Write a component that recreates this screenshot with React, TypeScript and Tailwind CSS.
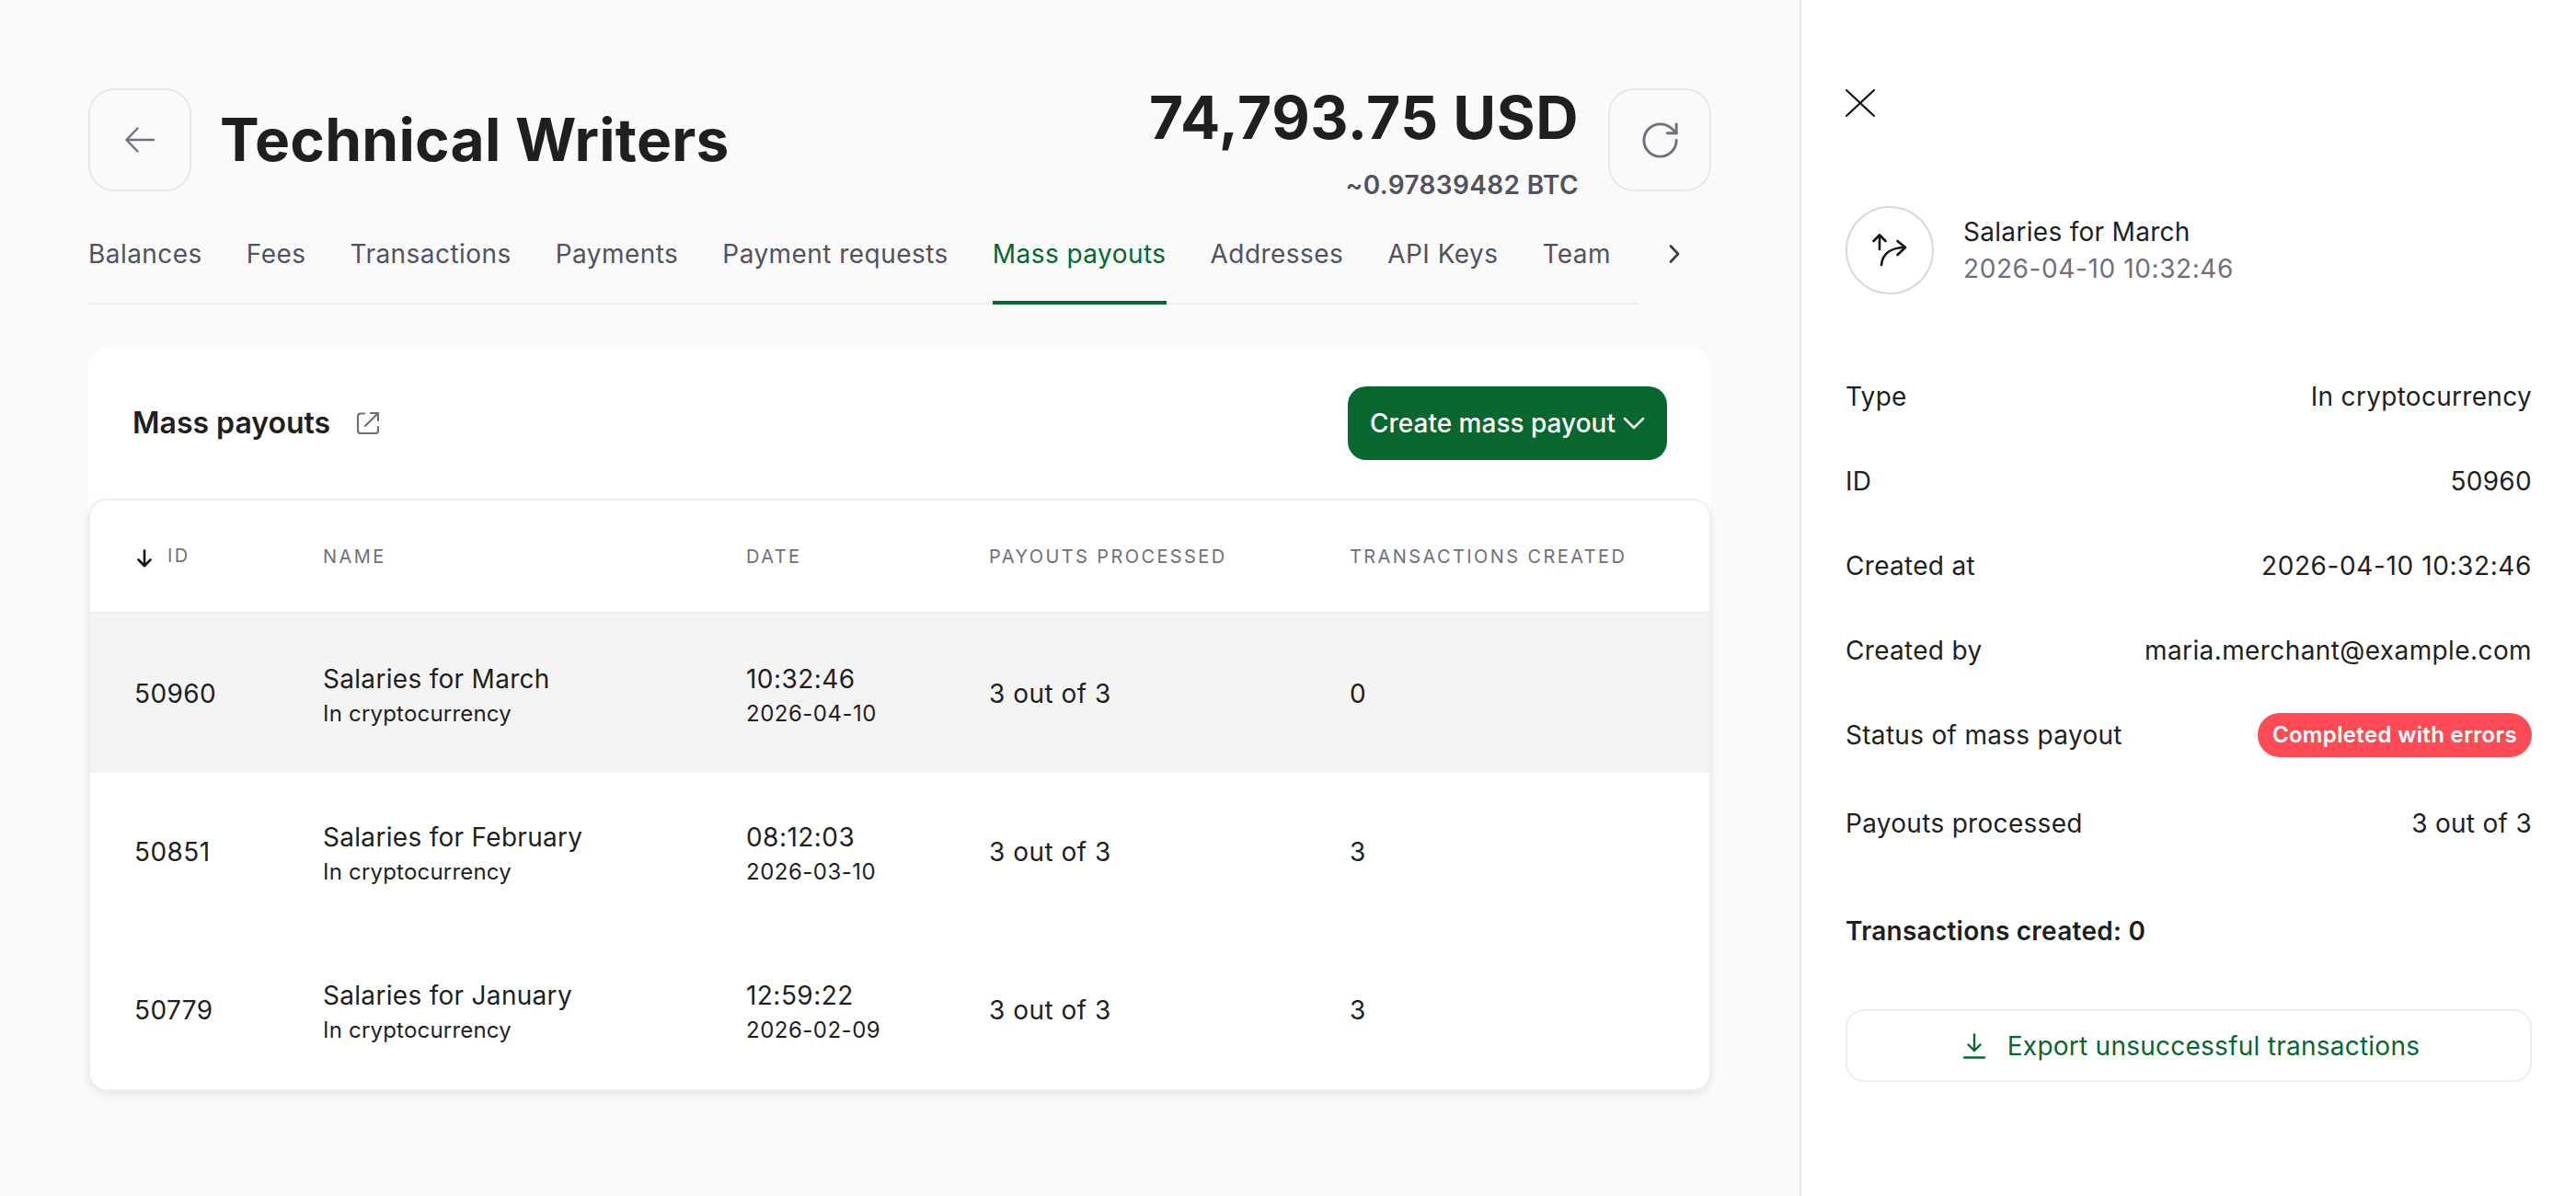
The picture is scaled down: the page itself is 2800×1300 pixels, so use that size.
import { ChevronDown, RotateCw } from "lucide-react";

const tabs = ["Balances", "Fees", "Transactions", "Payments", "Payment requests", "Mass payouts", "Addresses", "API Keys", "Team"];

const rows = [
  { id: "50960", name: "Salaries for March", time: "10:32:46", date: "2026-04-10", created: "0", selected: true },
  { id: "50851", name: "Salaries for February", time: "08:12:03", date: "2026-03-10", created: "3" },
  { id: "50779", name: "Salaries for January", time: "12:59:22", date: "2026-02-09", created: "3" },
];

const details = [
  { label: "Type", value: "In cryptocurrency" },
  { label: "ID", value: "50960" },
  { label: "Created at", value: "2026-04-10 10:32:46" },
  { label: "Created by", value: "maria.merchant@example.com" },
];

const gridCols = "grid grid-cols-[205px_460px_264px_392px_1fr]";

function MassPayoutIcon() {
  return (
    <svg viewBox="0 0 40 40" className="h-10 w-10" fill="none" stroke="#14141f" strokeWidth="2.6" strokeLinecap="round" strokeLinejoin="round">
      <path d="M9 19V3.5" />
      <path d="M2.5 10L9 3.5l6.5 6.5" />
      <path d="M11 36C12 25 20 17 37 17" />
      <path d="M28.5 10L37 17l-8.5 8" />
    </svg>
  );
}

function Tabs() {
  return (
    <div className="mt-[41px] flex items-start">
      <div className="flex w-[1684px] gap-12 border-b-2 border-[#f0f0f0] tracking-[0.45px]">
        {tabs.map((t) => (
          <div
            key={t}
            className={
              t === "Mass payouts"
                ? "-mb-[2px] h-[82px] border-b-4 border-[#07672f] pt-[8px] text-[28px] leading-[38px] text-[#07672f]"
                : "h-[80px] pt-[8px] text-[28px] leading-[38px] text-[#52525f]"
            }
          >
            {t}
          </div>
        ))}
      </div>
      <svg viewBox="0 0 14 20" className="ml-[33px] mt-[17px] h-[20px] w-[14px]" fill="none" stroke="#3a3a45" strokeWidth="2.6" strokeLinecap="round" strokeLinejoin="round">
        <path d="M3 1.5l8 8.5-8 8.5" />
      </svg>
    </div>
  );
}

function PayoutsTable() {
  return (
    <div className="rounded-[20px] border-2 border-[#efefef] bg-white shadow-[0_4px_8px_rgba(0,0,0,0.08)]">
      <div className={`${gridCols} h-[123px] items-center border-b-2 border-[#efefef] pl-[48px] text-[20px] tracking-[2.4px] text-[#70707c]`}>
        <div className="flex items-center">
          <svg viewBox="0 0 16 20" className="ml-[3px] mt-[4px] h-[20px] w-[16px]" fill="none" stroke="#14141f" strokeWidth="2.6" strokeLinecap="round" strokeLinejoin="round">
            <path d="M8 1.5V18" />
            <path d="M1.5 11.5L8 18l6.5-6.5" />
          </svg>
          <span className="ml-[17px] -mt-[2px]">ID</span>
        </div>
        <div>NAME</div>
        <div>DATE</div>
        <div>PAYOUTS PROCESSED</div>
        <div>TRANSACTIONS CREATED</div>
      </div>
      {rows.map((r) => (
        <div key={r.id} className={`${gridCols} items-center pl-[48px] text-[#1f1f1f] ${r.selected ? "h-[173px] bg-[#f4f4f4]" : "h-[172px]"}`}>
          <div className="text-[28px] tracking-[0.4px]">{r.id}</div>
          <div className="pt-[6px]">
            <div className="text-[28px] leading-[38px] tracking-[0.3px]">{r.name}</div>
            <div className="text-[24px] leading-[38px] tracking-[0.2px]">In cryptocurrency</div>
          </div>
          <div className="pt-[6px]">
            <div className="text-[28px] leading-[38px] tracking-[0.45px]">{r.time}</div>
            <div className="text-[24px] leading-[38px] tracking-[0.5px]">{r.date}</div>
          </div>
          <div className="text-[28px] tracking-[0.5px]">3 out of 3</div>
          <div className="text-[28px]">{r.created}</div>
        </div>
      ))}
    </div>
  );
}

function DetailsPanel() {
  return (
    <div className="w-[842px] shrink-0 bg-white px-[48px] pt-[97px] text-[#1f1f1f]">
      <svg viewBox="0 0 32 30" className="h-[30px] w-[32px]" fill="none" stroke="#14141f" strokeWidth="2.2" strokeLinecap="round">
        <path d="M1 1l30 28" />
        <path d="M31 1L1 29" />
      </svg>
      <div className="mt-[97px] flex items-center gap-[32px]">
        <div className="flex h-[96px] w-[96px] items-center justify-center rounded-full border-2 border-[#d8d8d8]">
          <MassPayoutIcon />
        </div>
        <div>
          <div className="text-[28px] leading-[40px] tracking-[0.3px]">Salaries for March</div>
          <div className="text-[28px] leading-[40px] tracking-[0.6px] text-[#70707c]">2026-04-10 10:32:46</div>
        </div>
      </div>
      <div className="mt-[65px] text-[28px] tracking-[0.3px]">
        {details.map((d) => (
          <div key={d.label} className="flex h-[92px] items-center justify-between">
            <span>{d.label}</span>
            <span className={d.label === "Created at" ? "tracking-[0.6px]" : d.label === "Created by" ? "tracking-[0.4px]" : ""}>{d.value}</span>
          </div>
        ))}
        <div className="flex h-[92px] items-center justify-between">
          <span>Status of mass payout</span>
          <span className="flex h-[48px] items-center rounded-full bg-[#ff4b55] px-4 text-[24px] font-semibold tracking-[0.35px] text-white">Completed with errors</span>
        </div>
        <div className="flex h-[100px] items-center justify-between">
          <span>Payouts processed</span>
          <span>3 out of 3</span>
        </div>
      </div>
      <div className="mt-[46px] text-[28px] font-semibold tracking-[0.25px]">Transactions created: 0</div>
      <button className="mt-[64px] flex h-[79px] w-full items-center justify-center gap-[24px] rounded-[20px] border-2 border-[#efefef] pl-[6px] text-[28px] tracking-[0.25px] text-[#07672f]">
        <svg viewBox="0 0 24 28" className="h-[28px] w-[24px]" fill="none" stroke="currentColor" strokeWidth="2.4" strokeLinecap="round" strokeLinejoin="round">
          <path d="M12 1.5V19" />
          <path d="M5.5 12.5L12 19l6.5-6.5" />
          <path d="M1 26.5h22" />
        </svg>
        Export unsuccessful transactions
      </button>
    </div>
  );
}

export default function App() {
  return (
    <div className="flex h-[1300px] w-[2800px] overflow-hidden bg-[#fafafa] font-['Inter',sans-serif]">
      <div className="w-[1958px] shrink-0 border-r-2 border-[#e4e4e4] px-[96px] pt-[96px]">
        <div className="flex h-[112px] w-[1764px] items-start justify-between">
          <div className="flex items-center gap-[32px]">
            <div className="flex h-[112px] w-[112px] items-center justify-center rounded-[28px] border-2 border-[#e8e8e8]">
              <svg viewBox="0 0 32 28" className="h-[28px] w-[32px]" fill="none" stroke="#70707c" strokeWidth="2.4" strokeLinecap="round" strokeLinejoin="round">
                <path d="M31 14H2" />
                <path d="M13.5 1.5L1.5 14l12 12.5" />
              </svg>
            </div>
            <h1 className="-ml-[1px] text-[64px] leading-none font-bold tracking-[0.25px] text-[#1f1f1f]">Technical Writers</h1>
          </div>
          <div className="flex items-start gap-[32px]">
            <div className="text-right">
              <div className="text-[64px] leading-[64px] font-bold tracking-[0.55px] text-[#1f1f1f]">74,793.75 USD</div>
              <div className="mt-[23px] text-[28px] leading-[36px] font-semibold tracking-[0.36px] text-[#52525f]">~0.97839482 BTC</div>
            </div>
            <div className="flex h-[112px] w-[112px] items-center justify-center rounded-[28px] border-2 border-[#e8e8e8]">
              <RotateCw className="h-[47px] w-[47px] text-[#70707c]" strokeWidth={1.5} />
            </div>
          </div>
        </div>
        <Tabs />
        <div className="mt-[46px] w-[1764px] rounded-[24px] bg-white">
          <div className="flex h-[165px] items-center justify-between px-[48px]">
            <div className="flex items-center gap-[29px]">
              <span className="text-[32px] font-semibold text-[#1f1f1f]">Mass payouts</span>
              <svg viewBox="0 0 24 24" className="h-[24px] w-[24px]" fill="none" stroke="#70707c" strokeWidth="2.2" strokeLinecap="round" strokeLinejoin="round">
                <path d="M8 1.5H4a3 3 0 0 0-3 3V20a3 3 0 0 0 3 3h16a3 3 0 0 0 3-3v-4" />
                <path d="M9 15L23 1" />
                <path d="M15 1h8v8" />
              </svg>
            </div>
            <button className="flex h-[80px] w-[347px] items-center rounded-[20px] bg-[#07672f] pl-[24px] text-[28px] font-medium text-white">
              Create mass payout
              <ChevronDown className="h-[40px] w-[40px]" strokeWidth={1.5} />
            </button>
          </div>
          <PayoutsTable />
        </div>
      </div>
      <DetailsPanel />
    </div>
  );
}
